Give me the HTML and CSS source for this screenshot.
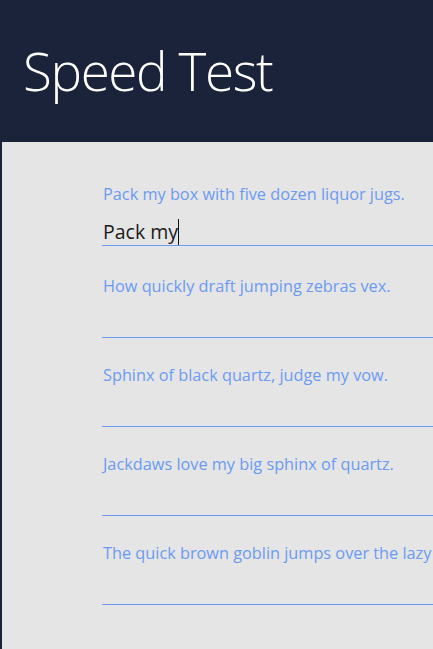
FILE: index.html
```html
<!DOCTYPE html>
<html>
<head>
<meta charset="utf-8">
<link rel="stylesheet" href="styles.css">
</head>
<body>
<div class="app">
  <header class="header">
    <h1 class="title">Speed Test</h1>
  </header>
  <main class="content">
    <div class="field first">
      <div class="label">Pack my box with five dozen liquor jugs.</div>
      <div class="input input-typed"><span class="typed">Pack my</span><span class="caret"></span></div>
    </div>
    <div class="field">
      <div class="label">How quickly draft jumping zebras vex.</div>
      <div class="input"></div>
    </div>
    <div class="field">
      <div class="label">Sphinx of black quartz, judge my vow.</div>
      <div class="input"></div>
    </div>
    <div class="field">
      <div class="label">Jackdaws love my big sphinx of quartz.</div>
      <div class="input"></div>
    </div>
    <div class="field">
      <div class="label">The quick brown goblin jumps over the lazy dwarf.</div>
      <div class="input"></div>
    </div>
  </main>
</div>
</body>
</html>
```
FILE: styles.css
```css
html, body {
  margin: 0;
  padding: 0;
  height: 100%;
  overflow: hidden;
}
body {
  background: #1a2339;
  font-family: "Open Sans", "Noto Sans", sans-serif;
}
.app {
  display: flex;
  flex-direction: column;
  height: 100%;
}
.header {
  height: 142px;
  flex: none;
  background: #1a2339;
  display: flex;
  align-items: flex-start;
}
.title {
  margin: 0;
  padding: 36px 0 0 23px;
  font-family: "Open Sans", sans-serif;
  font-weight: 300;
  font-size: 53px;
  line-height: 70px;
  color: #ffffff;
  letter-spacing: -1.4px;
}
.content {
  flex: 1;
  margin-left: 2px;
  background: #e5e5e5;
  padding: 42px 0 0 100px;
  overflow: hidden;
  white-space: nowrap;
}
.field {
  margin-bottom: 27px;
}
.field.first {
  margin-bottom: 30px;
}
.label {
  font-size: 16.3px;
  line-height: 20px;
  height: 20px;
  color: #6b9bf2;
  padding-left: 1px;
}
.input {
  height: 37px;
  border-bottom: 1px solid #6b9bf2;
  margin-top: 4px;
  margin-right: -40px;
  display: flex;
  align-items: flex-end;
}
.typed {
  font-size: 19.5px;
  line-height: 26px;
  color: #1a1a1a;
  padding-left: 1px;
  padding-bottom: 0;
}
.caret {
  width: 1px;
  height: 26px;
  background: #111;
  margin-bottom: 0;
}
```
